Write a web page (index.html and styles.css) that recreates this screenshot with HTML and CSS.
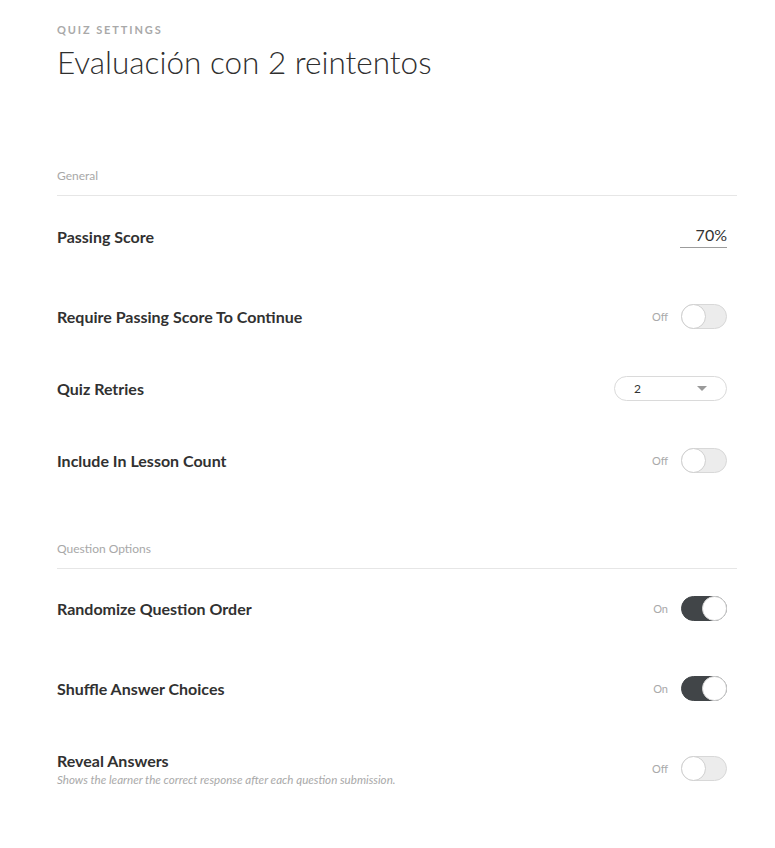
FILE: index.html
```html
<!DOCTYPE html>
<html lang="en">
<head>
  <meta charset="UTF-8" />
  <meta name="viewport" content="width=device-width, initial-scale=1.0" />
  <title>Quiz Settings</title>
  <link rel="stylesheet" href="styles.css">
</head>
<body>
  <div class="page">
    <header class="header">
      <div class="eyebrow">QUIZ SETTINGS</div>
      <h1>Evaluación con 2 reintentos</h1>
    </header>

    <section class="section general">
      <div class="section-label">General</div>

      <div class="row row-score">
        <div class="label">Passing Score</div>
        <div class="score">70%</div>
      </div>

      <div class="row">
        <div class="label">Require Passing Score To Continue</div>
        <div class="control">
          <span class="state">Off</span>
          <span class="toggle"></span>
        </div>
      </div>

      <div class="row">
        <div class="label">Quiz Retries</div>
        <div class="select">
          <span>2</span>
          <span class="caret"></span>
        </div>
      </div>

      <div class="row">
        <div class="label">Include In Lesson Count</div>
        <div class="control">
          <span class="state">Off</span>
          <span class="toggle"></span>
        </div>
      </div>
    </section>

    <section class="section questions">
      <div class="section-label">Question Options</div>

      <div class="row">
        <div class="label">Randomize Question Order</div>
        <div class="control">
          <span class="state">On</span>
          <span class="toggle on"></span>
        </div>
      </div>

      <div class="row">
        <div class="label">Shuffle Answer Choices</div>
        <div class="control">
          <span class="state">On</span>
          <span class="toggle on"></span>
        </div>
      </div>

      <div class="row">
        <div>
          <div class="label">Reveal Answers</div>
          <div class="hint">Shows the learner the correct response after each question submission.</div>
        </div>
        <div class="control">
          <span class="state">Off</span>
          <span class="toggle"></span>
        </div>
      </div>
    </section>
  </div>
</body>
</html>
```

FILE: styles.css
```css
body {
  margin: 0;
  background: #fff;
  color: #313131;
  font-family: Lato, 'Open Sans', sans-serif;
}

.page {
  width: 680px;
  padding: 22px 0 40px 57px;
}

.eyebrow {
  font-size: 11px;
  font-weight: 700;
  letter-spacing: 1.9px;
  color: #a9a9a9;
  line-height: 16px;
}

h1 {
  margin: 4px 0 0;
  font-size: 31.5px;
  font-weight: 300;
  line-height: 40px;
  color: #2f2f2f;
}

.section-label {
  font-size: 12px;
  line-height: 14px;
  color: #a8a8a8;
  padding-bottom: 12px;
  border-bottom: 1px solid #e6e6e6;
}

.general {
  margin-top: 87px;
}

.questions {
  margin-top: 46px;
  display: flex;
  flex-direction: column;
  gap: 8px;
}

.questions .section-label {
  margin-bottom: -5px;
}

.row {
  height: 72px;
  display: flex;
  align-items: center;
  justify-content: space-between;
  padding-right: 10px;
}

.row-score {
  margin-top: 4px;
  margin-bottom: 8px;
}

.label {
  font-size: 16px;
  font-weight: 700;
  color: #313131;
}

.hint {
  margin-top: 3px;
  font-size: 11.6px;
  font-style: italic;
  color: #a9a9a9;
}

.score {
  width: 47px;
  text-align: right;
  font-size: 16px;
  padding-bottom: 3px;
  border-bottom: 1px solid #9c9c9c;
  color: #333;
}

.control {
  display: flex;
  align-items: center;
  gap: 13px;
}

.state {
  font-size: 11px;
  color: #a9a9a9;
}

.toggle {
  position: relative;
  width: 44px;
  height: 23px;
  border: 1px solid #d8d8d8;
  border-radius: 13px;
  background: #ececec;
}

.toggle::after {
  content: "";
  position: absolute;
  top: -1px;
  left: -1px;
  width: 23px;
  height: 23px;
  border: 1px solid #cfcfcf;
  border-radius: 50%;
  background: #fff;
}

.toggle.on {
  background: #414548;
  border-color: #414548;
}

.toggle.on::after {
  left: auto;
  right: -1px;
  border-color: #d4d4d4;
}

.select {
  width: 111px;
  height: 23px;
  border: 1px solid #dadada;
  border-radius: 13px;
  display: flex;
  align-items: center;
  justify-content: space-between;
  font-size: 12px;
  color: #333;
}

.select span:first-child {
  margin-left: 19px;
}

.caret {
  margin-right: 19px;
  width: 0;
  height: 0;
  border-left: 5px solid transparent;
  border-right: 5px solid transparent;
  border-top: 5px solid #9a9a9a;
}
```
